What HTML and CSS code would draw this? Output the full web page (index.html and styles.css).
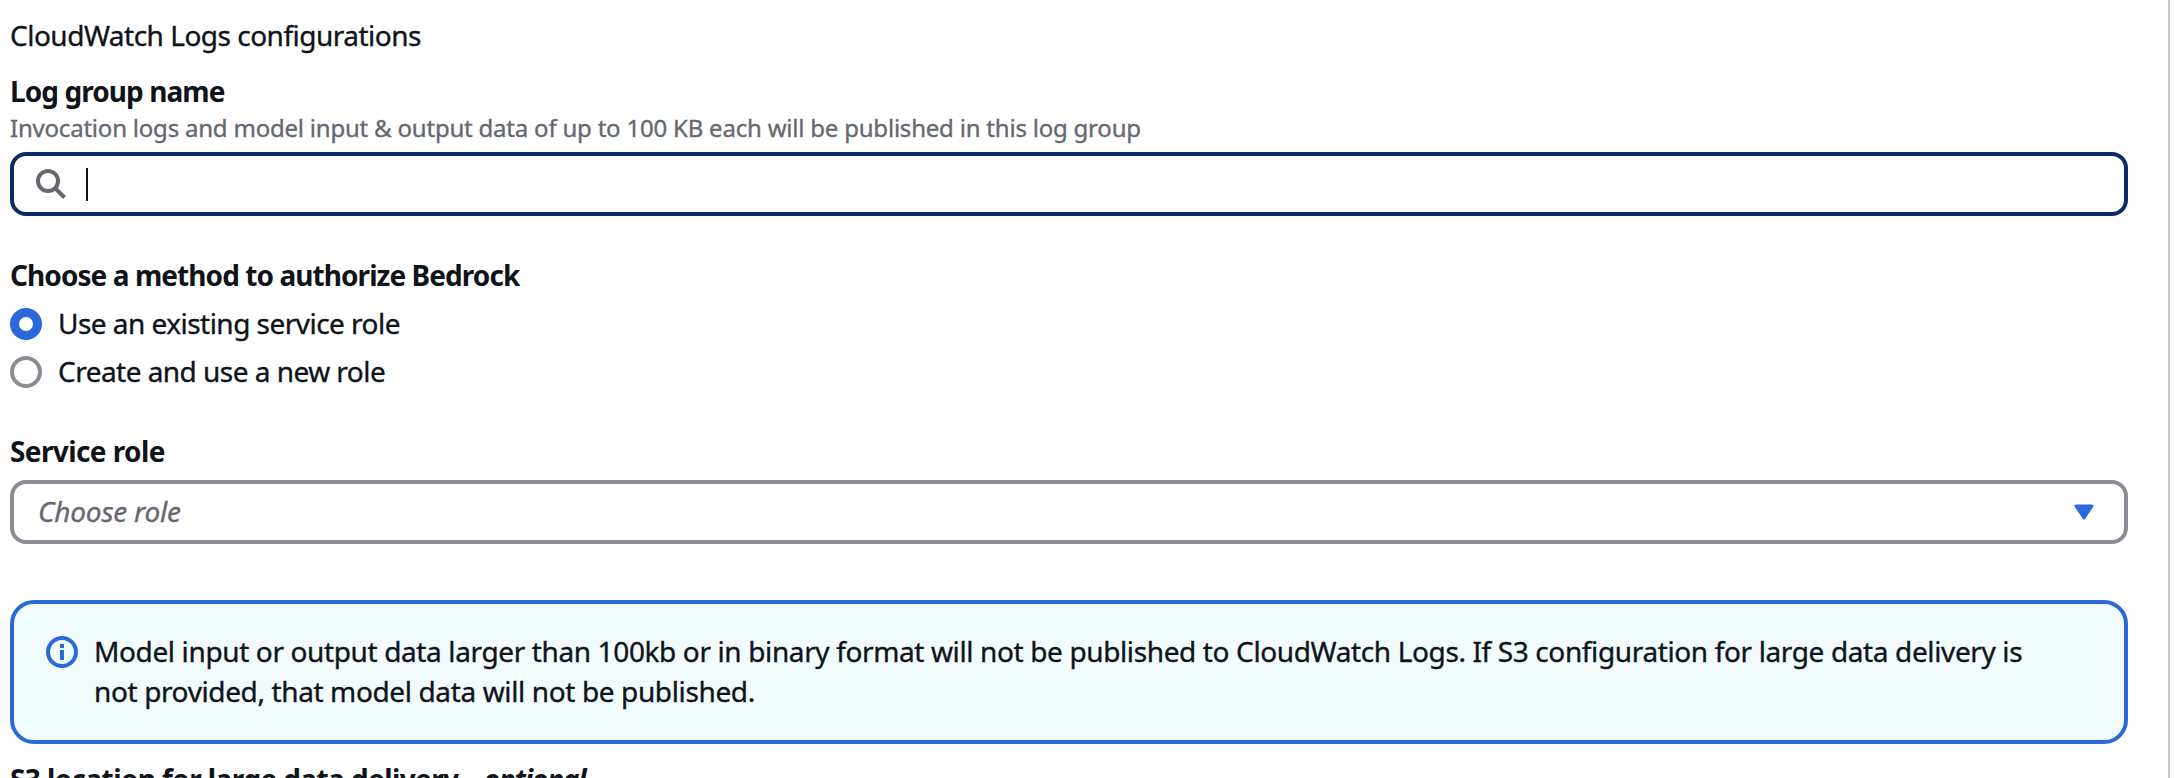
FILE: index.html
```html
<!DOCTYPE html>
<html lang="en">
<head>
<meta charset="utf-8">
<title>Logging settings</title>
<link rel="stylesheet" href="styles.css">
</head>
<body>
<main class="panel">
  <h2 class="title">CloudWatch Logs configurations</h2>

  <section class="field log-group">
    <div class="label tight">Log group name</div>
    <p class="hint">Invocation logs and model input &amp; output data of up to 100 KB each will be published in this log group</p>
    <div class="control search">
      <svg class="search-icon" viewBox="0 0 32 32" width="32" height="32"><circle cx="13" cy="13" r="10" /><path d="M20 20 L29.500 29.500" /></svg>
      <span class="caret"></span>
    </div>
  </section>

  <section class="field method">
    <div class="label tight">Choose a method to authorize Bedrock</div>
    <div class="option"><span class="radio checked"></span><span>Use an existing service role</span></div>
    <div class="option"><span class="radio"></span><span>Create and use a new role</span></div>
  </section>

  <section class="field role">
    <div class="label">Service role</div>
    <div class="control select">
      <span class="placeholder">Choose role</span>
      <svg class="arrow" viewBox="0 0 20 16" width="20" height="16"><path d="M2 2 H18 L10 14 Z" /></svg>
    </div>
  </section>

  <section class="alert">
    <svg class="info-icon" viewBox="0 0 32 32" width="32" height="32"><circle cx="16" cy="16" r="14" /><path d="M16 8v4M16 14v10" /></svg>
    <p class="message">Model input or output data larger than 100kb or in binary format will not be published to CloudWatch Logs. If S3 configuration for large data delivery is<br>not provided, that model data will not be published.</p>
  </section>

  <section class="s3">
    <div class="label">S3 location for large data delivery<span class="dash">-</span><em class="optional">optional</em></div>
  </section>
</main>
</body>
</html>
```
FILE: styles.css
```css
* { box-sizing: border-box; }
html, body {
  height: 100%;
  margin: 0;
  overflow: hidden;
}
body {
  background: #fff;
  color: #0f141a;
  font-family: "Noto Sans", "Open Sans", sans-serif;
  font-size: 28px;
  line-height: 40px;
  letter-spacing: -0.53px;
}
.panel {
  width: 2170px;
  height: 100%;
  overflow: hidden;
  padding: 15px 40px 0 10px;
  border-right: 2px solid #c6c6cd;
  white-space: nowrap;
}
h2, p { margin: 0; }
.title, .hint, .option, .placeholder, .message { -webkit-text-stroke: 0.35px currentColor; }
.title { font-size: 28px; font-weight: 400; letter-spacing: -0.5px; }
.label { font-weight: 700; letter-spacing: -0.6px; }
.label.tight { letter-spacing: -0.93px; }
.log-group { margin-top: 16px; }
.hint {
  margin: 1px 0 8px;
  color: #656871;
  font-size: 24px;
  line-height: 32px;
  letter-spacing: -0.21px;
}
.control {
  display: flex;
  align-items: center;
  height: 64px;
  border: 4px solid #8c8c94;
  border-radius: 16px;
  background: #fff;
}
.search { border-color: #0b2a66; padding-left: 21px; }
.search-icon { fill: none; stroke: #656871; stroke-width: 4; }
.caret { width: 2px; height: 33px; margin-left: 19px; background: #0f141a; }
.method { margin-top: 39px; }
.option {
  display: flex;
  align-items: center;
  gap: 16px;
  height: 40px;
  margin-top: 8px;
}
.radio {
  width: 32px;
  height: 32px;
  margin-top: 2px;
  border: 4px solid #8c8c94;
  border-radius: 50%;
}
.radio.checked { border: 9px solid #2b68d9; }
.role { margin-top: 40px; }
.select { justify-content: space-between; margin-top: 9px; padding: 0 30px 0 24px; }
.placeholder { margin-top: -2px; color: #656871; font-style: italic; letter-spacing: -0.2px; }
.arrow { fill: #2b68d9; stroke: #2b68d9; stroke-width: 3; stroke-linejoin: round; }
.alert {
  display: flex;
  gap: 16px;
  height: 144px;
  margin-top: 56px;
  padding: 27px 32px;
  border: 4px solid #2b68d9;
  border-radius: 24px;
  background: #f2fcff;
}
.message { letter-spacing: -0.373px; }
.info-icon { margin-top: 5px; fill: none; stroke: #2b68d9; stroke-width: 4; }
.s3 { margin-top: 15px; }
.dash { margin: 0 9px 0 8px; }
.optional { letter-spacing: -1.2px; }
```
